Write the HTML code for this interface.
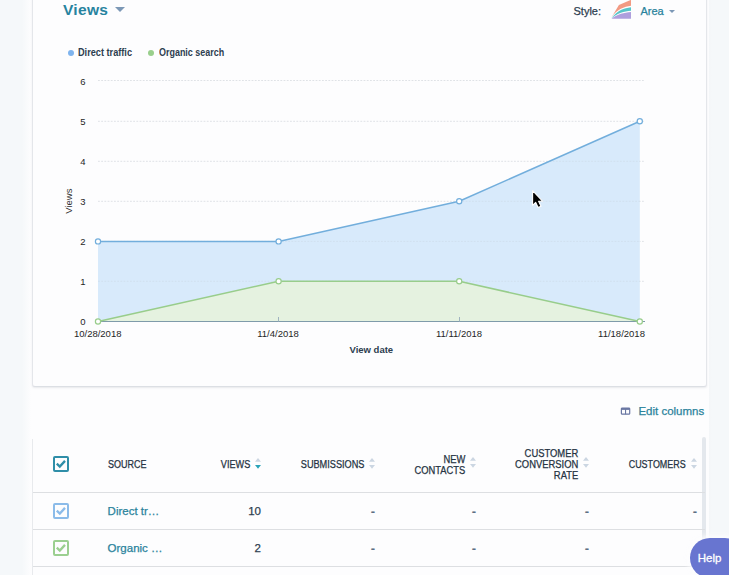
<!DOCTYPE html>
<html lang="en">
<head>
<meta charset="utf-8">
<title>Views report</title>
<style>
  html, body { margin: 0; padding: 0; }
  body {
    width: 729px; height: 575px; overflow: hidden; position: relative;
    background: #f5f8fa;
    font-family: "Liberation Sans", sans-serif;
    color: #33475b;
  }
  .abs { position: absolute; white-space: nowrap; line-height: 1; }
  .med { -webkit-text-stroke: 0.25px currentColor; }
  #panel { position: absolute; left: 31px; top: 0; width: 678px; height: 575px; background: #fdfdfe; }
  #fadeL { position: absolute; left: 22px; top: 0; width: 9px; height: 575px; background: linear-gradient(to right, #f5f8fa, #fdfdfe); }
  #fadeR { position: absolute; left: 709px; top: 0; width: 3px; height: 575px; background: linear-gradient(to right, #f4f6f8, #f5f8fa); }
  #card {
    position: absolute; left: 32px; top: -12px; width: 673px; height: 397px;
    background: #fdfdfe; border: 1px solid #e4e6ea; border-bottom-color:#dcdfe4; border-radius: 3px;
    box-shadow: 0 1px 2px rgba(45,62,80,0.10);
  }
  #title { left: 63px; top: 2.4px; font-size: 15.5px; font-weight: bold; color: #27839f; letter-spacing: 0.3px; }
  .caret { position: absolute; width: 0; height: 0; border-left: 4.5px solid transparent; border-right: 4.5px solid transparent; border-top: 4.5px solid #7c98b6; }
  .th { font-size: 10px; color: #253342; text-align: right; line-height: 11px; transform-origin: 100% 50%; }
  .td { font-size: 11.5px; color: #2d3e50; }
  .dash { font-size: 13px; font-weight: bold; color: #5c6f84; }
  .hr { position: absolute; left: 33px; width: 672px; height: 1px; background: #dddfe2; }
  .cb { position: absolute; left: 53px; width: 12px; height: 12px; border: 2px solid; border-radius: 2px; background: #fdfdfe; }
  .cb svg { position: absolute; left: 0; top: 0; }
  .abs.teal { color: #2a839c; }
  .sort { position: absolute; width: 6px; height: 11px; }
</style>
</head>
<body>
<div id="panel"></div><div id="fadeL"></div><div id="fadeR"></div>
<div id="card"></div>

<div id="title" class="abs">Views</div>
<div class="caret" style="left:115.2px; top:6.9px; border-left-width:5px; border-right-width:5px; border-top-width:5px;"></div>

<div class="abs med" style="left:573.5px; top:5.5px; font-size:11px; color:#2d3e50;">Style:</div>
<svg class="abs" style="left:610px; top:0;" width="22" height="20" viewBox="0 0 22 20">
  <path d="M1.6 17.2 L8.9 5.1 L21 -0.2 L21 5.8 C14 6.8 7.5 9 1.6 17.2 Z" fill="#f29a83"/>
  <path d="M1.6 18 C7.5 10.2 14 8.2 21 7.2 L21 10.7 C14 11.4 7.5 13 1.6 18.3 Z" fill="#56c5c8"/>
  <path d="M1.6 18.7 C7.5 14.2 14 12.7 21 12.1 L21 18.7 Z" fill="#ae9fdd"/>
</svg>
<div class="abs teal med" style="left:640.5px; top:5.5px; font-size:11px;">Area</div>
<div class="caret" style="left:669.3px; top:9.8px; border-left-width:3.3px; border-right-width:3.3px; border-top-width:3.8px;"></div>

<!-- legend -->
<div class="abs" style="left:67.5px; top:49.8px; width:6.4px; height:6.4px; border-radius:50%; background:#7fb4ee;"></div>
<div class="abs" style="left:78px; top:47.7px; font-size:10px; font-weight:bold; color:#2d3e50; transform-origin:0 50%; transform:scaleX(0.917);">Direct traffic</div>
<div class="abs" style="left:148px; top:49.8px; width:6.4px; height:6.4px; border-radius:50%; background:#99cf8c;"></div>
<div class="abs" style="left:158.8px; top:47.7px; font-size:10px; font-weight:bold; color:#2d3e50; transform-origin:0 50%; transform:scaleX(0.895);">Organic search</div>

<!-- chart -->
<svg class="abs" style="left:0; top:0;" width="729" height="400" viewBox="0 0 729 400" font-family="Liberation Sans, sans-serif">
  <g stroke="#dfe2e6" stroke-width="1" stroke-dasharray="1.8 1.4" fill="none">
    <line x1="98" y1="80.5" x2="645" y2="80.5"/>
    <line x1="98" y1="121.3" x2="645" y2="121.3"/>
    <line x1="98" y1="161.3" x2="645" y2="161.3"/>
    <line x1="98" y1="201.3" x2="645" y2="201.3"/>
    <line x1="98" y1="241.4" x2="645" y2="241.4"/>
    <line x1="98" y1="281.3" x2="645" y2="281.3"/>
  </g>
  <!-- blue area -->
  <path d="M98 241.4 L278.6 241.4 L459.2 201.3 L639.8 121.3 L639.8 321.5 L98 321.5 Z" fill="#d8eafb"/>
  <!-- green area -->
  <path d="M98 321.5 L278.6 281.3 L459.2 281.3 L639.8 321.5 Z" fill="#e5f2e0"/>
  <!-- gridlines over area (faint) -->
  <g stroke="#c9d6e2" stroke-width="1" stroke-dasharray="1.8 1.4" fill="none" opacity="0.45">
    <line x1="549.5" y1="161.3" x2="640" y2="161.3"/>
    <line x1="459.2" y1="201.3" x2="640" y2="201.3"/>
    <line x1="278.6" y1="241.4" x2="640" y2="241.4"/>
    <line x1="98" y1="281.3" x2="640" y2="281.3"/>
  </g>
  <!-- axis -->
  <line x1="98" y1="321.5" x2="645" y2="321.5" stroke="#7f9baa" stroke-width="1"/>
  <g stroke="#9fb3bf" stroke-width="1">
    <line x1="278.5" y1="317" x2="278.5" y2="321.5"/>
    <line x1="459.5" y1="317" x2="459.5" y2="321.5"/>
  </g>
  <!-- lines -->
  <path d="M98 241.4 L278.6 241.4 L459.2 201.3 L639.8 121.3" fill="none" stroke="#72aedc" stroke-width="1.5" stroke-linejoin="round"/>
  <path d="M98 321.5 L278.6 281.3 L459.2 281.3 L639.8 321.5" fill="none" stroke="#98cd8b" stroke-width="1.5" stroke-linejoin="round"/>
  <g fill="#ffffff" stroke="#72aedc" stroke-width="1.2">
    <circle cx="98" cy="241.4" r="2.6"/><circle cx="278.6" cy="241.4" r="2.6"/><circle cx="459.2" cy="201.3" r="2.6"/><circle cx="639.8" cy="121.3" r="2.6"/>
  </g>
  <g fill="#ffffff" stroke="#98cd8b" stroke-width="1.2">
    <circle cx="98" cy="321.5" r="2.6"/><circle cx="278.6" cy="281.3" r="2.6"/><circle cx="459.2" cy="281.3" r="2.6"/><circle cx="639.8" cy="321.5" r="2.6"/>
  </g>
  <!-- y labels -->
  <g font-size="9.5" fill="#262626" text-anchor="end">
    <text x="85.6" y="84.8">6</text>
    <text x="85.6" y="125">5</text>
    <text x="85.6" y="165">4</text>
    <text x="85.6" y="205">3</text>
    <text x="85.6" y="245">2</text>
    <text x="85.6" y="285">1</text>
    <text x="85.6" y="325">0</text>
  </g>
  <g font-size="9.5" fill="#262626" text-anchor="middle">
    <text x="97.7" y="337">10/28/2018</text>
    <text x="278" y="337">11/4/2018</text>
    <text x="459" y="337">11/11/2018</text>
    <text x="621.5" y="337">11/18/2018</text>
  </g>
  <text x="371.3" y="352.5" font-size="9.5" font-weight="bold" fill="#2d3e50" text-anchor="middle">View date</text>
  <text transform="translate(72.1 201.2) rotate(-90)" font-size="9.5" fill="#333333" text-anchor="middle">Views</text>
  <!-- cursor -->
  <path d="M532.6 190.6 L532.6 205.3 L535.7 202.4 L538.1 207.6 L541 206.3 L538.6 201.3 L542.8 201.3 Z" fill="#000" stroke="#fff" stroke-width="1.1" stroke-linejoin="round"/>
</svg>

<!-- edit columns -->
<svg class="abs" style="left:620px; top:407px;" width="11" height="9" viewBox="0 0 11 9">
  <rect x="1.4" y="1" width="8.3" height="6.2" rx="0.8" fill="none" stroke="#6a77a3" stroke-width="1.2"/>
  <rect x="1.4" y="1" width="8.3" height="1.9" fill="#6a77a3"/>
  <line x1="5.55" y1="2" x2="5.55" y2="7.2" stroke="#6a77a3" stroke-width="1.1"/>
</svg>
<div class="abs teal med" style="left:638.4px; top:405.5px; font-size:11.5px;">Edit columns</div>

<!-- table -->
<div style="position:absolute; left:32px; top:439px; width:1px; height:140px; background:#e8eaed;"></div>
<div style="position:absolute; left:702px; top:437px; width:3.7px; height:140px; background:#e4e8ed; border-radius:2px 2px 0 0;"></div>

<div class="cb" style="top:456px; border-color:#2f8ea8;"><svg width="12" height="12" viewBox="0 0 12 12"><path d="M1.8 5.6 L4.8 8.6 L10 2.9" fill="none" stroke="#2f8ea8" stroke-width="2.3"/></svg></div>
<div class="cb" style="top:503px; border-color:#8bbbe9;"><svg width="12" height="12" viewBox="0 0 12 12"><path d="M1.8 5.6 L4.8 8.6 L10 2.9" fill="none" stroke="#8bbbe9" stroke-width="2.3"/></svg></div>
<div class="cb" style="top:540px; border-color:#9bcf90;"><svg width="12" height="12" viewBox="0 0 12 12"><path d="M1.8 5.6 L4.8 8.6 L10 2.9" fill="none" stroke="#9bcf90" stroke-width="2.3"/></svg></div>

<div class="abs th med" style="left:107.7px; top:459.3px; text-align:left; transform-origin:0 50%; transform:scaleX(0.90);">SOURCE</div>
<div class="abs th med" style="right:478.6px; top:459.3px; transform:scaleX(0.913);">VIEWS</div>
<div class="abs th med" style="right:364.9px; top:459.3px; transform:scaleX(0.917);">SUBMISSIONS</div>
<div class="abs th med" style="right:263.7px; top:453.5px; transform:scaleX(0.935);">NEW<br>CONTACTS</div>
<div class="abs th med" style="right:150.7px; top:448.3px; transform:scaleX(0.94);">CUSTOMER<br>CONVERSION<br>RATE</div>
<div class="abs th med" style="right:43.1px; top:459.3px; transform:scaleX(0.895);">CUSTOMERS</div>

<svg class="sort" style="left:254.6px; top:458.2px;" viewBox="0 0 6 11"><path d="M0 3.8 L3 0 L6 3.8 Z" fill="#cbd6e2"/><path d="M0 7 L3 10.8 L6 7 Z" fill="#29a3b8"/></svg>
<svg class="sort" style="left:368.8px; top:458.2px;" viewBox="0 0 6 11"><path d="M0 3.8 L3 0 L6 3.8 Z" fill="#cbd6e2"/><path d="M0 7 L3 10.8 L6 7 Z" fill="#cbd6e2"/></svg>
<svg class="sort" style="left:470px; top:457.2px;" viewBox="0 0 6 11"><path d="M0 3.8 L3 0 L6 3.8 Z" fill="#cbd6e2"/><path d="M0 7 L3 10.8 L6 7 Z" fill="#cbd6e2"/></svg>
<svg class="sort" style="left:583.2px; top:457.2px;" viewBox="0 0 6 11"><path d="M0 3.8 L3 0 L6 3.8 Z" fill="#cbd6e2"/><path d="M0 7 L3 10.8 L6 7 Z" fill="#cbd6e2"/></svg>
<svg class="sort" style="left:690.9px; top:458.2px;" viewBox="0 0 6 11"><path d="M0 3.8 L3 0 L6 3.8 Z" fill="#cbd6e2"/><path d="M0 7 L3 10.8 L6 7 Z" fill="#cbd6e2"/></svg>

<div class="hr" style="top:492px;"></div>
<div class="hr" style="top:529px;"></div>
<div class="hr" style="top:566px;"></div>

<div class="abs td teal med" style="left:107.6px; top:506.3px;">Direct tr…</div>
<div class="abs td teal med" style="left:107.6px; top:543.2px;">Organic …</div>
<div class="abs td med" style="right:468px; top:506.3px;">10</div>
<div class="abs td med" style="right:468px; top:543.2px;">2</div>
<div class="abs dash" style="right:354px; top:504.6px;">-</div>
<div class="abs dash" style="right:354px; top:541.8px;">-</div>
<div class="abs dash" style="right:253px; top:504.6px;">-</div>
<div class="abs dash" style="right:253px; top:541.8px;">-</div>
<div class="abs dash" style="right:139.8px; top:504.6px;">-</div>
<div class="abs dash" style="right:139.8px; top:541.8px;">-</div>
<div class="abs dash" style="right:32px; top:504.6px;">-</div>

<!-- help -->
<div style="position:absolute; left:690px; top:538px; width:55px; height:40px; background:#6875d0; border-radius:20px; box-shadow:0 0 5px 3px rgba(253,253,254,0.85);"></div>
<div class="abs" style="left:697.8px; top:553.2px; font-size:11.5px; color:#ffffff; -webkit-text-stroke:0.3px #ffffff;">Help</div>
</body>
</html>
